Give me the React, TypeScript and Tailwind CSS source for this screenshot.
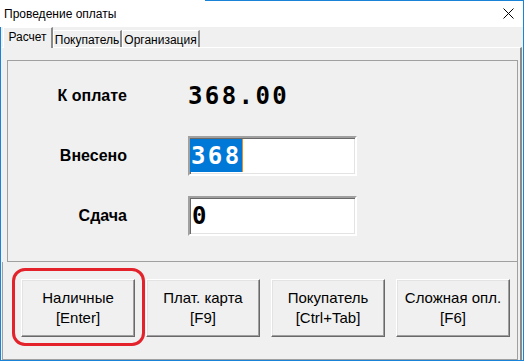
import React from "react";

const ui = { fontFamily: '"Liberation Sans", Arial, sans-serif' };
const mono = { fontFamily: '"DejaVu Sans Mono", "Liberation Mono", monospace' };

export default function App() {
  return (
    <div
      className="flex h-[361px] w-[524px] flex-col border-r border-b border-[#1883d7] bg-[#f0f0f0] text-black"
      style={ui}
    >
      {/* --- TITLE BAR --- */}
      <div className="flex h-px">
        <div className="w-[205px] bg-white" />
        <div className="flex-1 bg-[#1883d7]" />
      </div>
      <div className="flex h-[26px] items-center justify-between bg-white pl-[4px] pr-[9px]">
        <span className="text-[12px] leading-none">Проведение оплаты</span>
        <svg width="11" height="11" viewBox="0 0 11 11" className="mb-[2px]">
          <path d="M0.5 0.5 L10.5 10.5 M10.5 0.5 L0.5 10.5" stroke="#000" strokeWidth="1" />
        </svg>
      </div>

      {/* --- BODY --- */}
      <div className="flex flex-1 flex-col border-l border-[#1883d7]">
        {/* tabs */}
        <div className="flex h-[20px] items-end pl-[2px] text-[12px]">
          <Tab label="Расчет" w="w-[50px]" active />
          <Tab label="Покупатель" w="w-[69px]" />
          <Tab label="Организация" w="w-[78px]" />
        </div>

        {/* tab page */}
        <div className="mx-px flex flex-1 flex-col border-t border-r-2 border-t-white border-r-[#8a8a8a]">
          {/* group box */}
          <div className="ml-[5px] mr-[2px] mt-[12px] flex h-[202px] flex-col gap-[20px] border border-[#a0a0a0] pt-[15px]">
            <Row label="К оплате">
              <span className="text-[24px] font-bold tracking-[2.4px] leading-none" style={mono}>
                368.00
              </span>
            </Row>
            <Row label="Внесено">
              <Field>
                <div className="flex h-[33px] items-center bg-[#0078d7] pl-[1px] text-white">
                  <span className="text-[24px] font-bold tracking-[2.4px] leading-none" style={mono}>
                    368
                  </span>
                </div>
                <div className="h-[33px] w-px bg-[#f08a24]" />
              </Field>
            </Row>
            <Row label="Сдача">
              <Field>
                <div className="flex h-[33px] items-center pl-[2px]">
                  <span className="text-[24px] font-bold leading-none" style={mono}>
                    0
                  </span>
                </div>
              </Field>
            </Row>
          </div>

          {/* buttons panel */}
          <div className="mr-[2px] flex flex-1 items-start gap-[11px] border-x border-b border-[#a0a0a0] pl-[18px] pt-[17px]">
            <div className="relative">
              <Btn top="Наличные" bottom="[Enter]" />
              <div className="pointer-events-none absolute -bottom-[9px] -left-[9px] -right-[10px] -top-[11px] rounded-[13px] border-[3px] border-[#e3222b]" />
            </div>
            <Btn top="Плат. карта" bottom="[F9]" />
            <Btn top="Покупатель" bottom="[Ctrl+Tab]" />
            <Btn top="Сложная опл." bottom="[F6]" />
          </div>
        </div>
      </div>
    </div>
  );
}

function Tab({ label, w, active }: { label: string; w: string; active?: boolean }) {
  return (
    <div
      className={
        active
          ? `relative z-10 -mb-px flex h-[21px] ${w} justify-center border-t border-l border-r-2 border-t-white border-l-white border-r-[#8a8a8a] bg-[#f0f0f0] pt-[2px]`
          : `flex h-[17px] ${w} justify-center border-t border-l border-r-2 border-t-white border-l-white border-r-[#8a8a8a] pt-[2px]`
      }
    >
      <span className="leading-[14px]">{label}</span>
    </div>
  );
}

function Row({ label, children }: { label: string; children: React.ReactNode }) {
  return (
    <div className="flex h-[40px] items-center">
      <div className="w-[119px] text-right text-[16px] font-bold">{label}</div>
      <div className="ml-[61px] flex items-center">{children}</div>
    </div>
  );
}

function Field({ children }: { children: React.ReactNode }) {
  return (
    <div className="flex h-[40px] w-[169px] items-start border-2 border-t-[#a0a0a0] border-l-[#a0a0a0] border-b-white border-r-white bg-white pt-px shadow-[inset_1px_1px_0_#696969,inset_-1px_-1px_0_#e3e3e3]">
      {children}
    </div>
  );
}

function Btn({ top, bottom }: { top: string; bottom: string }) {
  return (
    <div className="flex h-[58px] w-[114px] flex-col items-center justify-center border border-t-white border-l-white border-b-[#696969] border-r-[#696969] bg-[#f0f0f0] text-[15px] leading-[20px] shadow-[inset_-1px_-1px_0_#a0a0a0,inset_1px_1px_0_#e3e3e3]">
      <span>{top}</span>
      <span>{bottom}</span>
    </div>
  );
}
